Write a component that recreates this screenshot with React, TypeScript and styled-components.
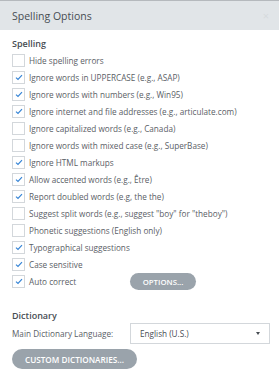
import styled, { createGlobalStyle } from "styled-components";

const GlobalStyle = createGlobalStyle`
  html, body {
    margin: 0;
    padding: 0;
    background: #ffffff;
    font-family: "Open Sans", "Liberation Sans", sans-serif;
  }
`;

type Option = { label: string; checked: boolean };

const options: Option[] = [
  { label: "Hide spelling errors", checked: false },
  { label: "Ignore words in UPPERCASE (e.g., ASAP)", checked: true },
  { label: "Ignore words with numbers (e.g., Win95)", checked: true },
  { label: "Ignore internet and file addresses (e.g., articulate.com)", checked: true },
  { label: "Ignore capitalized words (e.g., Canada)", checked: false },
  { label: "Ignore words with mixed case (e.g., SuperBase)", checked: false },
  { label: "Ignore HTML markups", checked: true },
  { label: "Allow accented words (e.g., Être)", checked: true },
  { label: "Report doubled words (e.g, the the)", checked: true },
  { label: 'Suggest split words (e.g., suggest "boy" for "theboy")', checked: false },
  { label: "Phonetic suggestions (English only)", checked: false },
  { label: "Typographical suggestions", checked: true },
  { label: "Case sensitive", checked: true },
  { label: "Auto correct", checked: true },
];

export default function App() {
  return (
    <Panel>
      <GlobalStyle />
      <Header>
        <Title>Spelling Options</Title>
        <Close>×</Close>
      </Header>
      <Body>
        <SectionLabel>Spelling</SectionLabel>
        <List>
          {options.map((o, i) => (
            <Row key={i}>
              <Check>
                <Box>
                  {o.checked && (
                    <svg width="8" height="7" viewBox="0 0 8 7">
                      <path d="M1 3.6 L3 5.4 L7 1.2" fill="none" stroke="#3584d6" strokeWidth="1.2" />
                    </svg>
                  )}
                </Box>
                <Label>{o.label}</Label>
              </Check>
              {i === options.length - 1 && <PillButton>OPTIONS...</PillButton>}
            </Row>
          ))}
        </List>
        <SectionLabel $top={19}>Dictionary</SectionLabel>
        <DictRow>
          <DictLabel>Main Dictionary Language:</DictLabel>
          <Select>
            <span>English (U.S.)</span>
            <Caret />
          </Select>
        </DictRow>
        <PillButton $wide>CUSTOM DICTIONARIES...</PillButton>
      </Body>
    </Panel>
  );
}

const Panel = styled.div`
  width: 279px;
  height: 390px;
  background: #ffffff;
  border-top: 1px solid #b5b9bd;
  box-sizing: border-box;
`;

const Header = styled.div`
  height: 29px;
  background: #e1e5e8;
  display: flex;
  align-items: center;
  justify-content: space-between;
  padding: 0 10px 0 12px;
`;

const Title = styled.div`
  font-size: 10.5px;
  color: #474d53;
`;

const Close = styled.div`
  font-size: 11px;
  color: #d6dadd;
`;

const Body = styled.div`
  padding: 7px 12px 0 12px;
`;

const SectionLabel = styled.div<{ $top?: number }>`
  font-size: 9px;
  font-weight: 600;
  color: #474d53;
  margin-top: ${(p) => p.$top ?? 0}px;
  height: 13px;
  line-height: 13px;
`;

const List = styled.div`
  display: flex;
  flex-direction: column;
  margin-top: 2px;
`;

const Row = styled.div`
  display: grid;
  grid-template-columns: 118px auto;
  align-items: center;
  height: 17px;
`;

const Check = styled.div`
  display: flex;
  align-items: center;
`;

const Box = styled.div`
  width: 11px;
  height: 11px;
  border: 1px solid #d3d7db;
  background: #ffffff;
  display: flex;
  align-items: center;
  justify-content: center;
  flex-shrink: 0;
`;

const Label = styled.span`
  margin-left: 4px;
  font-size: 8.2px;
  color: #5a6066;
  white-space: nowrap;
`;

const PillButton = styled.div<{ $wide?: boolean }>`
  width: ${(p) => (p.$wide ? 125 : 66)}px;
  height: ${(p) => (p.$wide ? 20 : 17)}px;
  border-radius: 10px;
  background: #9aa3ab;
  color: #ffffff;
  font-size: ${(p) => (p.$wide ? 8.2 : 7.8)}px;
  font-weight: 600;
  display: flex;
  align-items: center;
  justify-content: center;
  box-sizing: border-box;
  margin-top: ${(p) => (p.$wide ? 5 : 0)}px;
`;

const DictRow = styled.div`
  display: grid;
  grid-template-columns: 118px 140px;
  align-items: center;
  margin-top: 1px;
`;

const DictLabel = styled.span`
  font-size: 8.2px;
  color: #5a6066;
`;

const Select = styled.div`
  height: 21px;
  border: 1px solid #d3d7db;
  box-sizing: border-box;
  display: flex;
  align-items: center;
  justify-content: space-between;
  padding: 0 9px 0 9px;
  font-size: 8.2px;
  color: #474d53;
`;

const Caret = styled.span`
  width: 0;
  height: 0;
  border-left: 2.5px solid transparent;
  border-right: 2.5px solid transparent;
  border-top: 3px solid #474d53;
`;
